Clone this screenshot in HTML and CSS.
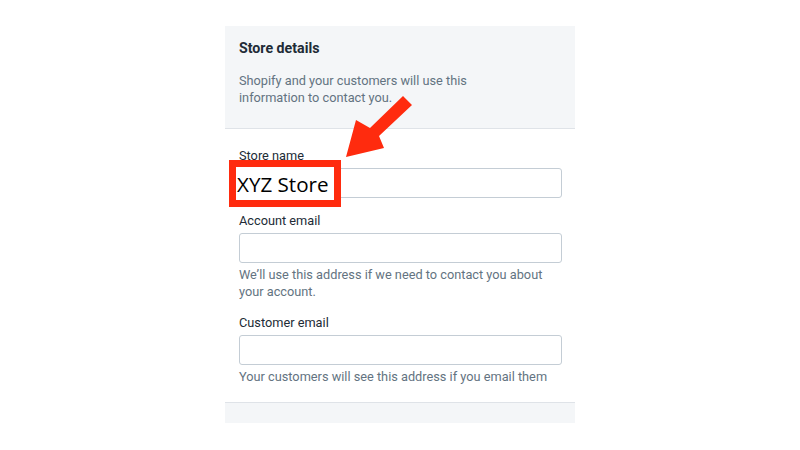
FILE: index.html
```html
<!DOCTYPE html>
<html>
<head>
<meta charset="utf-8">
<link rel="stylesheet" href="styles.css">
</head>
<body>
<div class="page">
  <div class="card">
    <div class="card-header">
      <h2 class="title">Store details</h2>
      <p class="desc">Shopify and your customers will use this information to contact you.</p>
    </div>
    <div class="card-body">
      <div class="field">
        <label class="label">Store name</label>
        <div class="input"></div>
      </div>
      <div class="field">
        <label class="label">Account email</label>
        <div class="input"></div>
        <p class="help">We’ll use this address if we need to contact you about your account.</p>
      </div>
      <div class="field">
        <label class="label">Customer email</label>
        <div class="input"></div>
        <p class="help">Your customers will see this address if you email them</p>
      </div>
    </div>
    <div class="card-footer"></div>
  </div>
</div>
<div class="highlight"><span class="highlight-text">XYZ Store</span></div>
<svg class="arrow" width="800" height="450" viewBox="0 0 800 450">
  <polygon fill="#ff2b0e" points="403,96 412,105 379,136 384,148 346,157 356,120 370,128"/>
</svg>
</body>
</html>
```
FILE: styles.css
```css
html, body {
  margin: 0;
  padding: 0;
  background: #ffffff;
}
body {
  font-family: Roboto, "Liberation Sans", sans-serif;
  width: 800px;
  height: 450px;
  overflow: hidden;
  position: relative;
}
.page {
  padding-top: 26px;
  display: flex;
  justify-content: center;
}
.card {
  width: 350px;
  background: #ffffff;
}
.card-header {
  background: #f4f6f8;
  height: 103px;
  box-sizing: border-box;
  padding: 12px 14px 0 14px;
  border-bottom: 1px solid #dfe3e8;
}
.title {
  margin: 0;
  font-size: 14.2px;
  line-height: 20px;
  font-weight: 700;
  color: #212b36;
}
.desc {
  margin: 14px 0 0 0;
  font-size: 12.75px;
  line-height: 17px;
  color: #637381;
  width: 240px;
}
.card-body {
  padding: 18px 13px 17px 14px;
  border-bottom: 1px solid #dfe3e8;
  display: flex;
  flex-direction: column;
  gap: 14px;
}
.field {
  display: flex;
  flex-direction: column;
}
.label {
  font-size: 12.75px;
  line-height: 17px;
  color: #212b36;
  margin-bottom: 4px;
}
.input {
  height: 30px;
  box-sizing: border-box;
  border: 1px solid #c4cdd5;
  border-radius: 3px;
  background: #fff;
}
.help {
  margin: 3px 0 0 0;
  font-size: 12.75px;
  line-height: 17px;
  color: #637381;
}
.card-footer {
  height: 20px;
  background: #f4f6f8;
}
.highlight {
  position: absolute;
  left: 229px;
  top: 160px;
  width: 112px;
  height: 47px;
  box-sizing: border-box;
  border: 7.5px solid #ff2b0e;
  background: #ffffff;
  display: flex;
  align-items: center;
}
.highlight-text {
  font-family: "Open Sans", sans-serif;
  font-size: 20.6px;
  line-height: 24px;
  color: #000;
  margin-left: 1px;
}
.arrow {
  position: absolute;
  left: 0;
  top: 0;
}
```
